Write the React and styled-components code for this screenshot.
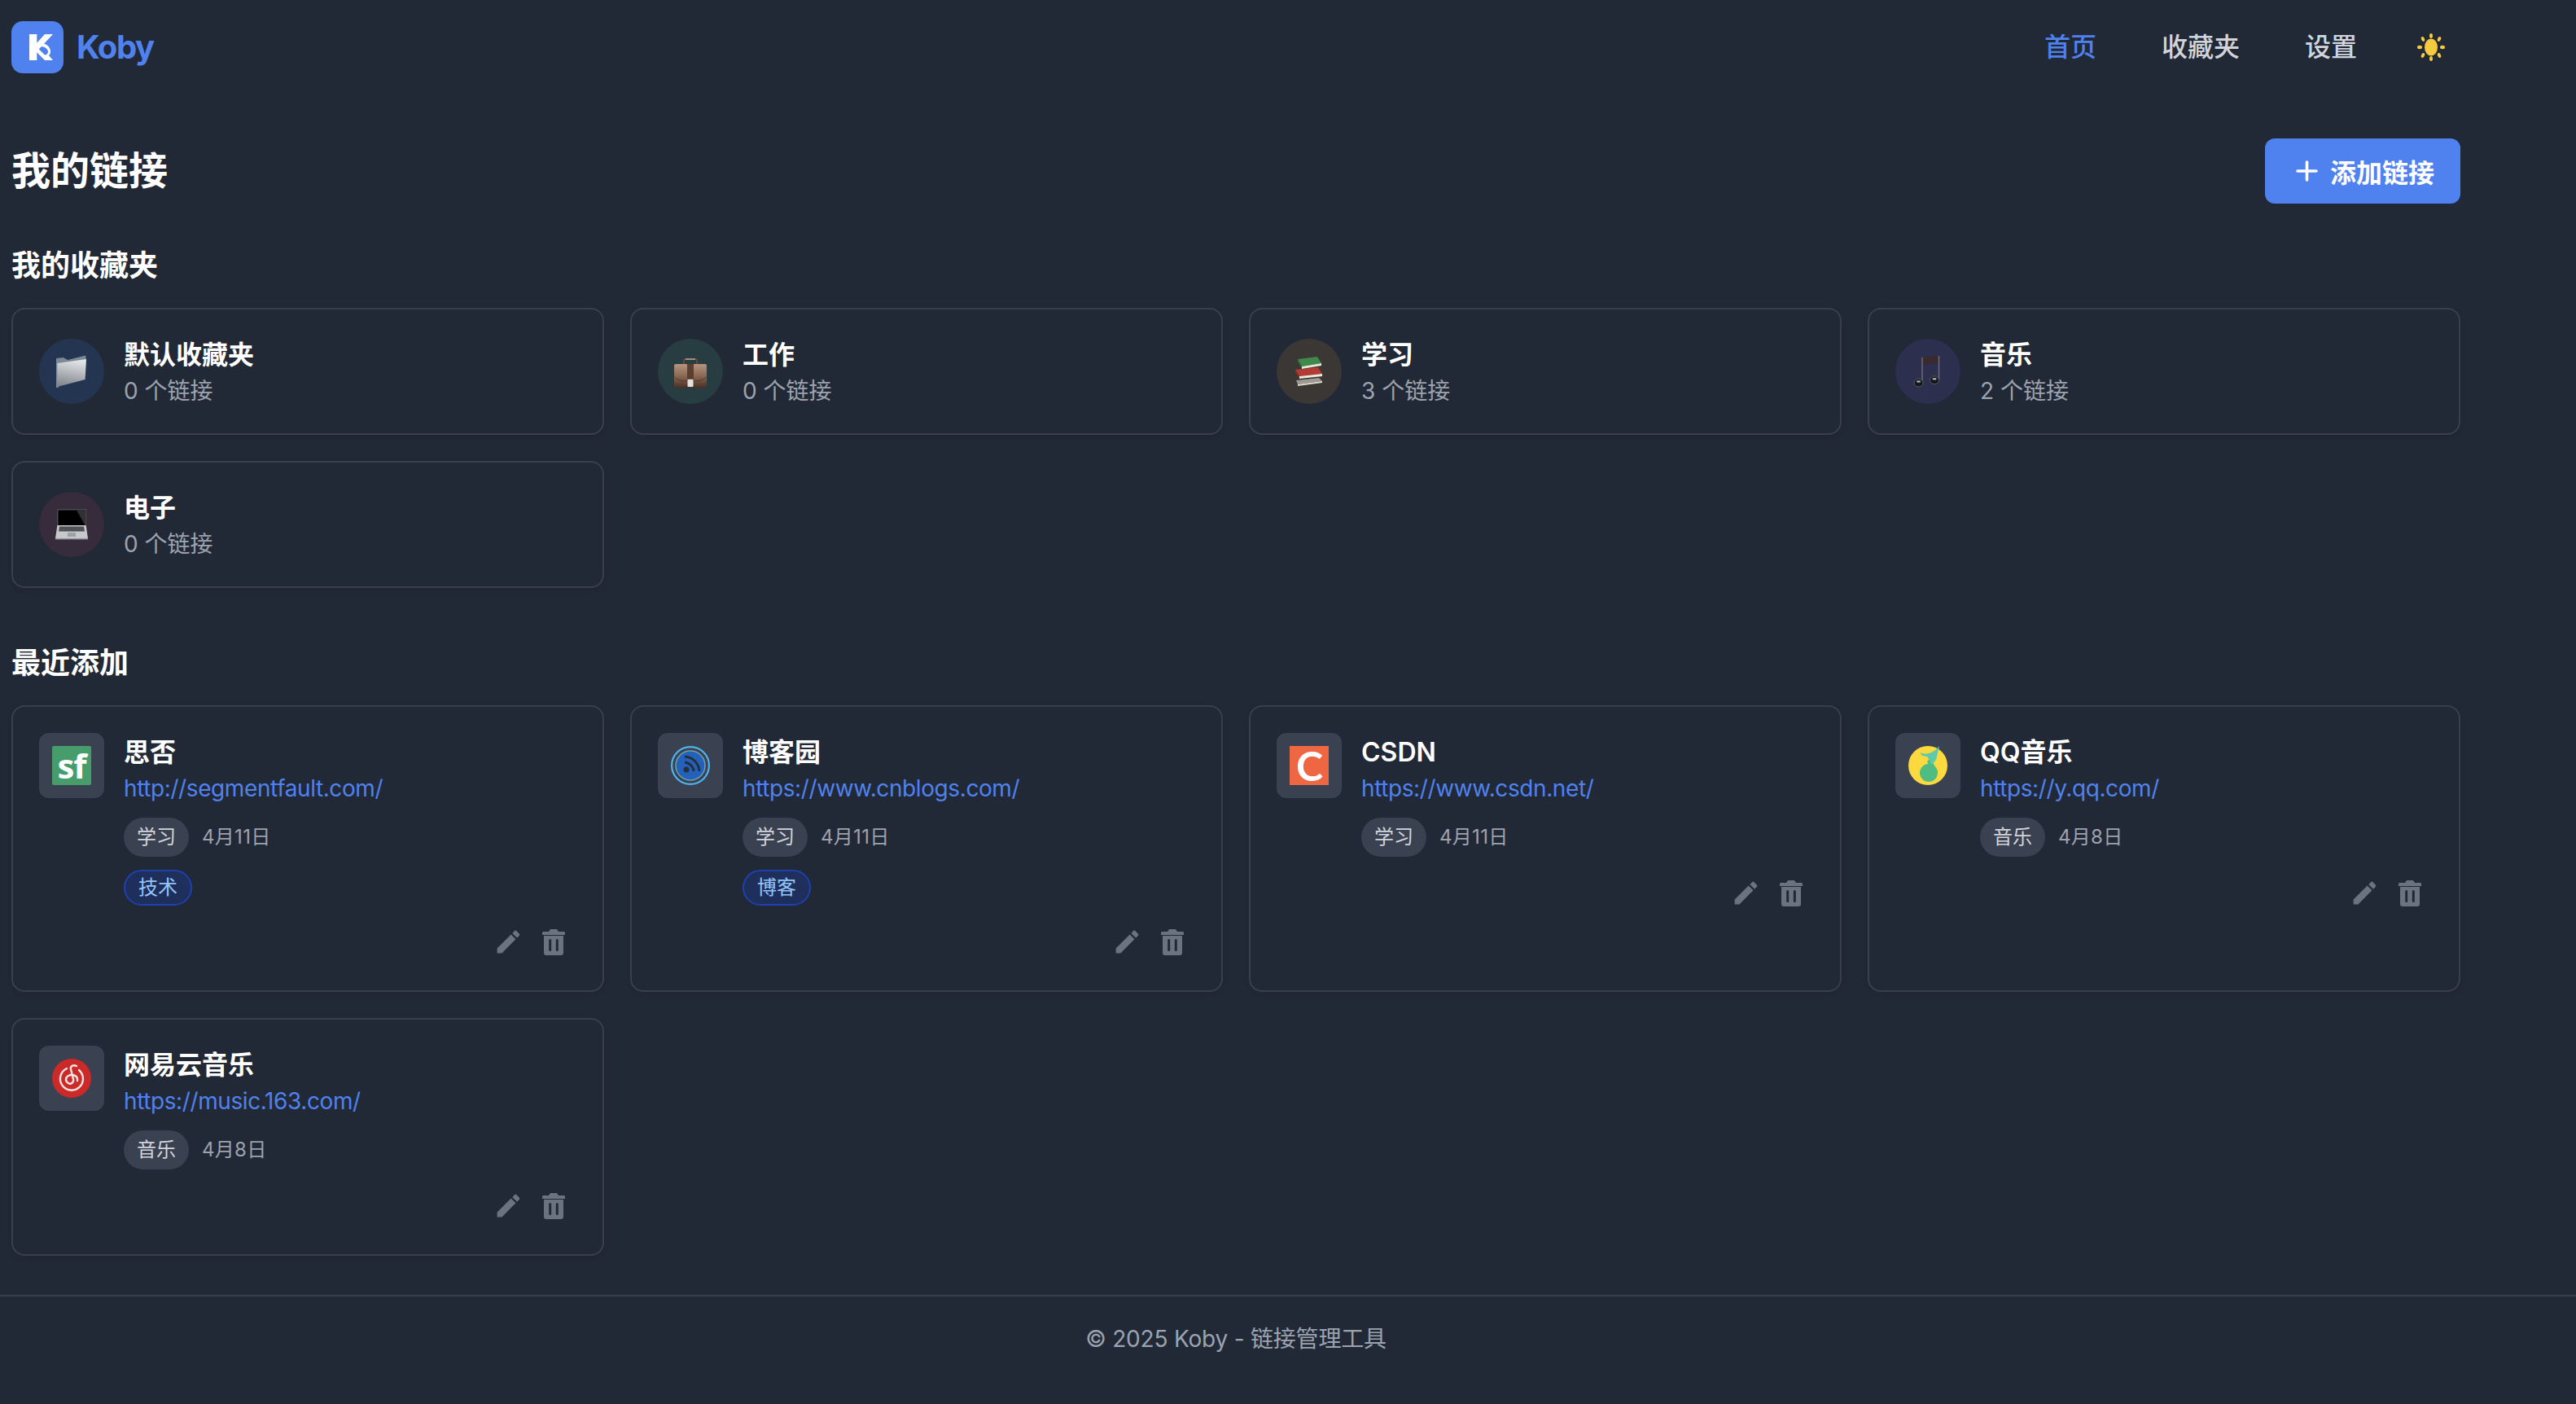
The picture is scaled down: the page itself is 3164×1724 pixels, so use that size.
import styled, { createGlobalStyle } from 'styled-components'

const GlobalStyle = createGlobalStyle`
    * { box-sizing: border-box; }
    html, body { margin: 0; padding: 0; background: #222936; }
    body {
        font-family: Inter, "Noto Sans CJK SC", sans-serif;
        color: #fff;
    }
`

const Page = styled.div`
    min-height: 100vh;
    background: #222936;
`

const Wrap = styled.div`
    width: 3008px;
    margin-left: 14px;
`

const Header = styled(Wrap).attrs({ as: 'header' })`
    height: 116px;
    display: flex;
    align-items: center;
    justify-content: space-between;
`

const Brand = styled.div`
    display: flex;
    align-items: center;
    gap: 16px;
    font-size: 40px;
    font-weight: 700;
    line-height: 56px;
    letter-spacing: -1.4px;
    color: #4f82ef;
`

const LogoBox = styled.div`
    width: 64px;
    height: 64px;
    border-radius: 14px;
    background: #4f82ef;
    display: flex;
`

const Nav = styled.nav`
    display: flex;
    align-items: center;
    gap: 71px;
    margin-right: 16px;
`

const NavLinks = styled.div`
    display: flex;
    gap: 80px;
`

const NavLink = styled.a`
    font-size: 32px;
    line-height: 48px;
    font-weight: 500;
    color: ${props => props.$active ? '#4f82ef' : '#d1d5db'};
`

const ThemeButton = styled.div`
    width: 40px;
    height: 40px;
    display: flex;
    align-items: center;
    justify-content: center;
`

const Main = styled(Wrap).attrs({ as: 'main' })`
    padding-top: 54px;
`

const TitleRow = styled.div`
    display: flex;
    align-items: center;
    justify-content: space-between;
    margin-bottom: 48px;
`

const Title = styled.h1`
    margin: 0;
    font-size: 48px;
    line-height: 64px;
    font-weight: 700;
    color: #fff;
`

const AddButton = styled.button`
    height: 80px;
    width: 240px;
    padding: 0 32px;
    display: flex;
    align-items: center;
    gap: 8px;
    border: 0;
    border-radius: 12px;
    background: #4f82ef;
    color: #fff;
    font-family: inherit;
    font-size: 32px;
    font-weight: 600;
`

const SectionTitle = styled.h2`
    margin: 0 0 24px;
    font-size: 36px;
    line-height: 56px;
    font-weight: 700;
    color: #fff;
`

const Grid = styled.div`
    display: grid;
    grid-template-columns: repeat(4, 728px);
    gap: 32px;
    margin-bottom: ${props => props.$mb || 0}px;
`

const Card = styled.div`
    border: 2px solid #383f4d;
    border-radius: 16px;
    padding: 32px;
    background: #222936;
    box-shadow: 0 2px 6px rgba(0, 0, 0, 0.1);
`

const FolderCard = styled(Card)`
    display: flex;
    align-items: center;
    gap: 24px;
`

const FolderIcon = styled.div`
    width: 80px;
    height: 80px;
    flex: none;
    border-radius: 50%;
    background: ${props => props.$bg};
    display: flex;
    align-items: center;
    justify-content: center;
`

const Name = styled.div`
    font-size: 32px;
    line-height: 48px;
    font-weight: 600;
    color: #fff;
`

const Count = styled.div`
    font-size: 28px;
    line-height: 40px;
    color: #9ca3af;
`

const LinkTop = styled.div`
    display: flex;
    align-items: flex-start;
    gap: 24px;
`

const SiteIcon = styled.div`
    width: 80px;
    height: 80px;
    flex: none;
    border-radius: 12px;
    background: #3a4150;
    display: flex;
    align-items: center;
    justify-content: center;
`

const LetterIcon = styled.div`
    width: 48px;
    height: 48px;
    display: flex;
    align-items: center;
    justify-content: center;
    border-radius: ${props => props.$round}px;
    background: ${props => props.$bg};
    color: #fff;
    font-family: ${props => props.$font}, sans-serif;
    font-size: ${props => props.$size}px;
    font-weight: 700;
    line-height: 48px;
    letter-spacing: -1px;
`

const Url = styled.a`
    display: block;
    font-size: 28px;
    line-height: 40px;
    letter-spacing: -0.4px;
    color: #4f82ef;
`

const Meta = styled.div`
    display: flex;
    align-items: center;
    gap: 16px;
    margin-top: 16px;
`

const Pill = styled.span`
    padding: 8px 16px;
    border-radius: 24px;
    background: #3a4150;
    color: #d1d5db;
    font-size: 24px;
    line-height: 32px;
`

const DateText = styled.span`
    font-size: 24px;
    line-height: 32px;
    letter-spacing: 0.3px;
    color: #9ca3af;
`

const Tags = styled.div`
    display: flex;
    margin-top: 16px;
`

const Tag = styled.span`
    padding: 4px 16px;
    border: 2px solid #1e40af;
    border-radius: 24px;
    background: #1f2f5c;
    color: #93c5fd;
    font-size: 24px;
    line-height: 32px;
`

const Actions = styled.div`
    display: flex;
    justify-content: flex-end;
    margin-top: 16px;
`

const IconButton = styled.button`
    width: 56px;
    height: 56px;
    padding: 0;
    border: 0;
    background: none;
    color: #6b7280;
    display: flex;
    align-items: center;
    justify-content: center;
`

const Footer = styled.footer`
    margin-top: 48px;
    border-top: 2px solid #383f4d;
    padding-top: 32px;
`

const FooterText = styled(Wrap)`
    text-align: center;
    font-size: 28px;
    line-height: 40px;
    letter-spacing: -0.2px;
    color: #9ca3af;
`

const LogoMark = () => (
    <svg width="64" height="64" viewBox="0 0 64 64" fill="#fff">
        <path d="M22 16h9.300v32H22zM31 27 41 16h10L37 31l-3 3-3-2z" />
        <path fillRule="evenodd" d="M31 32l5-5c6 0 12 4 12 10 0 3-1 4-2 5l5 6H41l-5-5-5-5zM36.500 31l-3 3 7.500 7.500c2.500 0 4-2 4-4 0-3.500-4-6-8.500-6.500z" />
    </svg>
)

const Sun = () => (
    <svg width="34" height="34" viewBox="0 0 34 34" fill="#f6ca3e">
        <ellipse cx="17" cy="17" rx="8" ry="10.500" />
        <ellipse cx="17" cy="3" rx="2" ry="3" />
        <ellipse cx="17" cy="31" rx="2" ry="3" />
        <ellipse cx="3" cy="17" rx="3" ry="2.200" />
        <ellipse cx="31" cy="17" rx="3" ry="2.200" />
        <ellipse cx="7" cy="7" rx="2" ry="3" transform="rotate(-25 7 7)" />
        <ellipse cx="27" cy="7" rx="2" ry="3" transform="rotate(25 27 7)" />
        <ellipse cx="7" cy="27" rx="2" ry="3" transform="rotate(25 7 27)" />
        <ellipse cx="27" cy="27" rx="2" ry="3" transform="rotate(-25 27 27)" />
    </svg>
)

const Plus = () => (
    <svg width="40" height="40" viewBox="0 0 40 40" stroke="#fff" strokeWidth="3.600" strokeLinecap="round">
        <path d="M19.500 9v22M8 20h23" />
    </svg>
)

const PencilIcon = () => (
    <svg width="37" height="37" viewBox="0 0 24 24" fill="currentColor">
        <path d="M3 17.250V21h3.750L17.810 9.940l-3.750-3.750L3 17.250zM20.710 7.040c.39-.39.39-1.020 0-1.410l-2.340-2.340c-.39-.39-1.020-.39-1.410 0l-1.830 1.830 3.750 3.750 1.830-1.830z" />
    </svg>
)

const TrashIcon = () => (
    <svg width="40" height="40" viewBox="0 0 40 40" fill="currentColor">
        <path d="M16 5h8l2 3h7a1.500 1.500 0 0 1 1 1.500V12H6V9.500A1.500 1.500 0 0 1 7 8h7z" />
        <path fillRule="evenodd" d="M8 13h24v21a3 3 0 0 1-3 3H11a3 3 0 0 1-3-3zM15.700 17a1.500 1.500 0 0 0-1.500 1.500v12a1.500 1.500 0 0 0 3 0v-12a1.500 1.500 0 0 0-1.500-1.500zM24.300 17a1.500 1.500 0 0 0-1.500 1.500v12a1.500 1.500 0 0 0 3 0v-12a1.500 1.500 0 0 0-1.500-1.500z" />
    </svg>
)

const FolderEmoji = () => (
    <svg width="40" height="40" viewBox="0 0 40 40">
        <defs>
            <linearGradient id="fface" x1="0.45" y1="0" x2="0.25" y2="1">
                <stop offset="0" stopColor="#e2e5e8" />
                <stop offset="1" stopColor="#7f8489" />
            </linearGradient>
        </defs>
        <path fill="#7c8894" d="M1 4l9-1 5 3L37 .5 38 6 3 40H1z" />
        <path fill="url(#fface)" d="M2.400 10 38 5l-1.400 25L2.400 39z" />
    </svg>
)

const CaseEmoji = () => (
    <svg width="40" height="40" viewBox="0 0 40 40">
        <defs>
            <linearGradient id="cface" x1="0" y1="0" x2="0" y2="1">
                <stop offset="0" stopColor="#b5957f" />
                <stop offset="0.5" stopColor="#8a6a55" />
                <stop offset="1" stopColor="#4a3023" />
            </linearGradient>
        </defs>
        <path fill="none" stroke="#5f483c" strokeWidth="2" d="M12 11V7q0-2 2-2h12q2 0 2 2v4" />
        <path fill="#a98a74" d="M14 4h12v2H14z" />
        <rect x="0" y="11" width="40" height="29" rx="2" fill="url(#cface)" />
        <path fill="#5a3f30" d="M16 11h8v18h-8z" />
        <path fill="none" stroke="#4a3024" strokeWidth="0.800" d="M1 27q3 5 15 5M39 27q-3 5-15 5" />
        <rect x="16.500" y="30" width="7" height="9" rx="1" fill="#e4e2df" />
    </svg>
)

const BooksEmoji = () => (
    <svg width="40" height="40" viewBox="0 0 40 40">
        <path fill="#3f8a4b" d="M6 5l24-3 5 8-24 4z" />
        <path fill="#e8e4d6" d="M11 14l24-4v3L11 17z" />
        <path fill="#2d6b3a" d="M6 5l5 9v3L6 8z" />
        <path fill="#b23b33" d="M3 18l28-3 5 8-28 3z" />
        <path fill="#ece8da" d="M8 26l28-3v3L8 29z" />
        <path fill="#8a2c27" d="M3 18l5 8v3l-5-8z" />
        <path fill="#9c9a94" d="M4 31l28-3 4 4-30 4z" />
        <path fill="#e0dccc" d="M6 36l30-4v2L6 38z" />
    </svg>
)

const NotesEmoji = () => (
    <svg width="40" height="40" viewBox="0 0 40 40">
        <path fill="#3a2a2e" d="M12.600 3 34 .7V9L12.600 12z" />
        <path fill="none" stroke="#70747b" strokeWidth="1.300" d="M13 3v31M33.500 1v30" />
        <ellipse cx="8.500" cy="34" rx="5.500" ry="5" fill="#14171b" stroke="#565a60" />
        <ellipse cx="28" cy="30.700" rx="5.500" ry="5" fill="#14171b" stroke="#565a60" />
        <ellipse cx="8.500" cy="32.500" rx="2.600" ry="1.300" fill="#aeb1b5" />
        <ellipse cx="28" cy="29.200" rx="2.600" ry="1.300" fill="#aeb1b5" />
    </svg>
)

const LaptopEmoji = () => (
    <svg width="40" height="40" viewBox="0 0 40 40">
        <path fill="#4a4d52" d="M3 1h34a1 1 0 0 1 1 1v19H2V2a1 1 0 0 1 1-1z" />
        <path fill="#000" d="M3.500 2.500h33V21h-33z" />
        <path fill="#2f3135" d="M26 2.500h10.500V21z" />
        <path fill="#c6c8cb" d="M2.400 21h35.200L40 37H0z" />
        <path fill="#4f5256" d="M5 22.500h30l1 6H4z" />
        <path fill="#9fa2a5" d="M15 30h10v5H15z" />
        <path fill="#8e9093" d="M0 37h40v1.500H0z" />
    </svg>
)

const BlogIcon = () => (
    <svg width="48" height="48" viewBox="0 0 48 48">
        <circle cx="24" cy="24" r="22.900" fill="none" stroke="#4fb4ee" strokeWidth="2.200" />
        <circle cx="24" cy="24" r="18" fill="#2461b8" stroke="#6fa0ae" strokeWidth="1.500" />
        <circle cx="19" cy="29" r="3.500" fill="#252f3f" />
        <path fill="none" stroke="#252f3f" strokeWidth="3" d="M17 20a12 12 0 0 1 11 11M17 13a19 19 0 0 1 18 18" />
    </svg>
)

const QqIcon = () => (
    <svg width="48" height="48" viewBox="0 0 48 48">
        <circle cx="24" cy="24" r="24" fill="#fbd93f" />
        <circle cx="25" cy="33" r="11" fill="#4fbd82" />
        <path fill="#4fbd82" d="M27 15l9 16-4 6-9-18z" />
        <path fill="#5fc9ab" d="M14 8c5 2 14 4 24-8l-4 17-5 6-6-10-6-1z" />
    </svg>
)

const MusicIcon = () => (
    <svg width="48" height="48" viewBox="0 0 48 48">
        <circle cx="24" cy="24" r="24" fill="#cb2a28" />
        <path fill="none" stroke="#f6e3e2" strokeWidth="2.400" strokeLinecap="round" d="M18 12a14 14 0 1 0 15 2M30 9c-4-2-8 0-7 4l3 12c1 4-3 7-6 5-4-2-4-7 0-9 5-3 12 0 11 6" />
    </svg>
)

const folders = [
    { name: '默认收藏夹', count: 0, bg: '#243551', icon: <FolderEmoji /> },
    { name: '工作', count: 0, bg: '#283d41', icon: <CaseEmoji /> },
    { name: '学习', count: 3, bg: '#3a3734', icon: <BooksEmoji /> },
    { name: '音乐', count: 2, bg: '#2c2f4e', icon: <NotesEmoji /> },
    { name: '电子', count: 0, bg: '#372c3c', icon: <LaptopEmoji /> },
]

const links = [
    {
        name: '思否', url: 'http://segmentfault.com/', folder: '学习', date: '4月11日', tag: '技术',
        icon: <LetterIcon $bg="#469c6b" $round={2} $font="'Open Sans'" $size={42}>sf</LetterIcon>,
    },
    { name: '博客园', url: 'https://www.cnblogs.com/', folder: '学习', date: '4月11日', tag: '博客', icon: <BlogIcon /> },
    {
        name: 'CSDN', url: 'https://www.csdn.net/', folder: '学习', date: '4月11日',
        icon: <LetterIcon $bg="#ee6742" $round={0} $font="Lato" $size={50}>C</LetterIcon>,
    },
    { name: 'QQ音乐', url: 'https://y.qq.com/', folder: '音乐', date: '4月8日', icon: <QqIcon /> },
    { name: '网易云音乐', url: 'https://music.163.com/', folder: '音乐', date: '4月8日', icon: <MusicIcon /> },
]

const App = function appComponent() {
    return (
        <Page>
            <GlobalStyle />
            <Header>
                <Brand>
                    <LogoBox><LogoMark /></LogoBox>
                    Koby
                </Brand>
                <Nav>
                    <NavLinks>
                        <NavLink $active>首页</NavLink>
                        <NavLink>收藏夹</NavLink>
                        <NavLink>设置</NavLink>
                    </NavLinks>
                    <ThemeButton><Sun /></ThemeButton>
                </Nav>
            </Header>

            <Main>
                <TitleRow>
                    <Title>我的链接</Title>
                    <AddButton><Plus />添加链接</AddButton>
                </TitleRow>

                <SectionTitle>我的收藏夹</SectionTitle>
                <Grid $mb={64}>
                    {folders.map((folder) => (
                        <FolderCard key={folder.name}>
                            <FolderIcon $bg={folder.bg}>{folder.icon}</FolderIcon>
                            <div>
                                <Name>{folder.name}</Name>
                                <Count>{folder.count} 个链接</Count>
                            </div>
                        </FolderCard>
                    ))}
                </Grid>

                <SectionTitle>最近添加</SectionTitle>
                <Grid>
                    {links.map((link) => (
                        <Card key={link.name}>
                            <LinkTop>
                                <SiteIcon>{link.icon}</SiteIcon>
                                <div>
                                    <Name>{link.name}</Name>
                                    <Url>{link.url}</Url>
                                    <Meta>
                                        <Pill>{link.folder}</Pill>
                                        <DateText>{link.date}</DateText>
                                    </Meta>
                                    {link.tag && <Tags><Tag>{link.tag}</Tag></Tags>}
                                </div>
                            </LinkTop>
                            <Actions>
                                <IconButton><PencilIcon /></IconButton>
                                <IconButton><TrashIcon /></IconButton>
                            </Actions>
                        </Card>
                    ))}
                </Grid>
            </Main>

            <Footer>
                <FooterText>© 2025 Koby - 链接管理工具</FooterText>
            </Footer>
        </Page>
    )
}

export default App
